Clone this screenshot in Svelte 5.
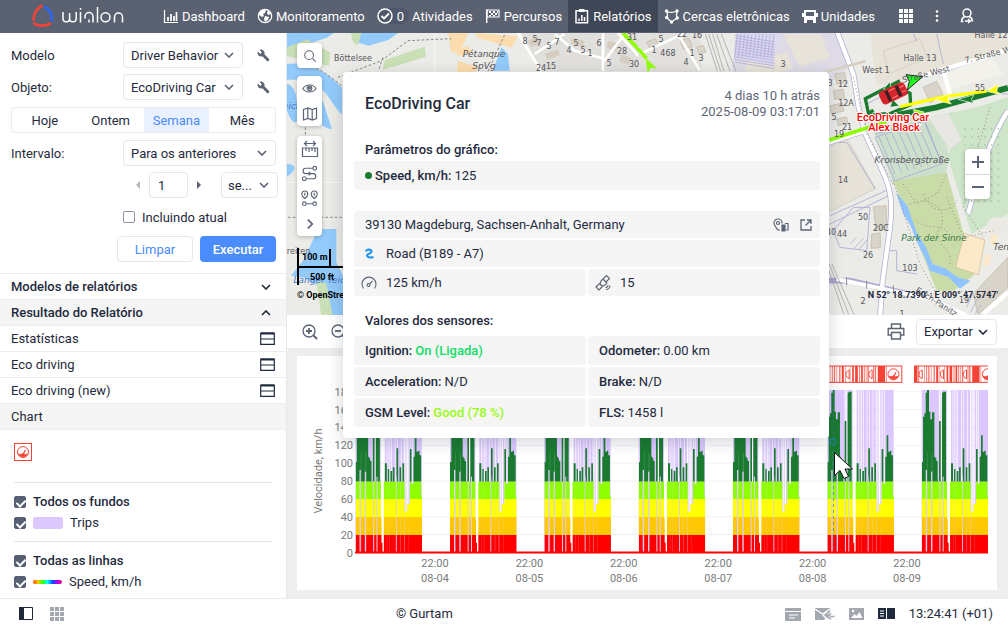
<script lang="ts">
  type NavItem = { label: string; icon: string; active?: boolean; count?: number };

  const navItems: NavItem[] = [
    { label: 'Dashboard', icon: 'chart' },
    { label: 'Monitoramento', icon: 'globe' },
    { label: 'Atividades', icon: 'check', count: 0 },
    { label: 'Percursos', icon: 'flag' },
    { label: 'Relatórios', icon: 'report', active: true },
    { label: 'Cercas eletrônicas', icon: 'fence' },
    { label: 'Unidades', icon: 'bus' },
  ];

  const periods = ['Hoje', 'Ontem', 'Semana', 'Mês'];
  let period = $state('Semana');
  let amount = $state('1');
  let includeCurrent = $state(false);

  const tables = ['Estatísticas', 'Eco driving', 'Eco driving (new)'];

  const sensors = [
    { name: 'Ignition', value: 'On (Ligada)', color: '#0fdc64' },
    { name: 'Odometer', value: '0.00 km' },
    { name: 'Acceleration', value: 'N/D' },
    { name: 'Brake', value: 'N/D' },
    { name: 'GSM Level', value: 'Good (78 %)', color: '#97fb12' },
    { name: 'FLS', value: '1458 l' },
  ];

  // ---- chart ----
  const dayStarts = [355.5, 450, 544.3, 638.7, 733, 827.3, 921.7];
  const dayLabels = ['08-04', '08-05', '08-06', '08-07', '08-08', '08-09'];
  const ticks = [0, 20, 40, 60, 80, 100, 120, 140, 160, 180];
  const yOf = (v: number) => 552.5 - v * 0.893;

  // one day of driving, a third of a pixel per unit: [right edge, top]
  const steps = [
    [4, 306], [8, 170], [12, 160], [16, 98], [22, 90], [26, 155], [31, 178], [38, 157],
    [41, 290], [44, 295], [48, 303], [52, 365], [57, 183], [61, 365], [64, 98], [73, 95],
    [76, 365], [78, 475], [81, 548], [85, 578], [88, 365], [94, 310], [97, 365], [101, 327],
    [105, 365], [110, 333], [112, 365], [117, 322], [123, 365], [128, 265], [132, 365],
    [137, 322], [141, 365], [146, 310], [148, 365], [155, 455], [163, 432], [168, 267],
    [174, 372], [178, 290], [183, 226], [188, 275], [192, 272], [197, 286], [200, 410],
  ];
  const silhouette = 'M0 580' + steps.map(([x, y]) => `V${y}H${x}`).join('') + 'V580Z';

  const bands = [
    { y: 88, h: 277, color: '#1a7b30' },
    { y: 365, h: 52, color: '#8fff00' },
    { y: 417, h: 54, color: '#ffff00' },
    { y: 471, h: 54, color: '#ffc800' },
    { y: 525, h: 56, color: '#ff0000' },
  ];

  const trips = [
    [0, 52], [55, 2], [60, 16], [88, 5], [95, 7], [104, 3], [109, 9], [120, 5], [127, 9],
    [138, 7], [148, 2], [153, 2], [159, 4], [166, 4], [172, 27],
  ];

  // gaps in the signal: [left, top, width, opacity]
  const slits = [
    [12, 330, 4, 1], [16, 275, 2, 0.2], [28, 335, 4, 1], [30, 280, 2, 0.3],
    [53, 365, 3, 1], [63, 350, 3, 1], [94, 365, 1, 0.4], [101, 365, 2, 0.3],
    [121, 350, 3, 0.9], [134, 365, 2, 0.4], [146, 330, 2, 0.6], [159, 430, 1, 0.4],
  ];

  // violation markers over the plot: [left, width]
  const stripes = [
    [0, 10], [12, 3], [30, 2], [36, 3], [42, 4], [50, 2], [58, 4], [66, 6], [76, 2], [90, 2],
    [97, 5], [106, 8], [118, 3], [124, 5], [132, 3], [138, 2], [143, 4], [160, 3], [165, 4],
    [174, 22], [199, 2],
  ];

  // ---- map ----
  const streetNumbers: [number, number, string][] = [
    [525, 41, '8'], [535, 39, '5'], [539, 43, '7'], [549, 46, '5'], [557, 42, '7'], [569, 50, '4'],
    [576, 43, '5'], [583, 50, '5'], [590, 53, '1'], [599, 43, '6'], [622, 51, '28'], [609, 63, '5'],
    [634, 64, '30'], [541, 68, '24'], [551, 66, '15'], [661, 39, '5'], [654, 50, '1'], [668, 53, '468'],
    [692, 53, '1'], [701, 58, '3'], [686, 62, '4'], [783, 64, '3'], [843, 84, '12'], [846, 103, '12A'],
    [834, 117, '5'], [847, 127, '21'], [839, 134, '19'], [843, 180, '14'], [863, 217, '50'],
    [881, 228, '20C'], [842, 234, '44'], [831, 232, '40'], [868, 255, '26'], [910, 268, '103'],
    [863, 301, '2'], [964, 300, '19'], [980, 88, '55'], [902, 314, '1'], [682, 34, '22'], [697, 35, '16'],
    [632, 37, '31'], [830, 83, '3'],
  ];
</script>

{#snippet chevron(up = false)}
  <svg class="chev" class:up viewBox="0 0 10 6" width="10" height="6">
    <path d="M1 1l4 4 4-4" fill="none" stroke="currentColor" stroke-width="1.6" />
  </svg>
{/snippet}

{#snippet wrench()}
  <svg viewBox="0 0 24 24" width="13" height="13" fill="#5b6475">
    <path d="M22.7 19l-9.1-9.1c.9-2.3.4-5-1.5-6.9-2-2-5-2.4-7.4-1.3L9 6 6 9 1.600 4.700C.4 7.100.9 10.100 2.900 12.100c1.900 1.900 4.600 2.400 6.900 1.500l9.100 9.100c.4.4 1 .4 1.400 0l2.300-2.300c.5-.4.5-1.100.1-1.400z" />
  </svg>
{/snippet}

{#snippet gauge()}
  <circle cx="9" cy="9" r="5.500" fill="#fff" stroke="#f44336" />
  <path d="M4.500 11q2.500 1 4.500-.5 2 1.500 4.500.5a5 5 0 0 1-9 0z" fill="#f44336" stroke="#f44336" stroke-width=".8" />
  <path d="M9 11.500l2.500-4.500" stroke="#f44336" stroke-width="1.200" />
{/snippet}

{#snippet magnifier(sign: string)}
  <svg viewBox="0 0 18 18" width="18" height="18" fill="none" stroke="#5b6475" stroke-width="1.300">
    <circle cx="8" cy="8" r="6" />
    <path d="M12.500 12.500l3.500 3.500" stroke-width="2" />
    <path d={sign} stroke-width="1.800" />
  </svg>
{/snippet}

<div class="app">
  <header>
    <a href="#home" class="logo" aria-label="wialon">
      <svg viewBox="0 0 92 24" width="92" height="24" fill="none">
        <path d="M10.500 1.500C4.500 4 .8 11.500 1.800 17" stroke="#f44336" stroke-width="2.600" />
        <path d="M1.500 19c4.500 3.600 12 3.200 17.500.2" stroke="#f44336" stroke-width="2.800" />
        <path d="M12.500 2.500c5.500 3 8.500 9 7 15" stroke="#2b66f6" stroke-width="2.600" />
        <g stroke="#fff" stroke-width="1.500">
          <path d="M31 8v6.500a3.300 3.300 0 0 0 6.600 0V9m0 5.500a3.300 3.300 0 0 0 6.600 0V8" />
          <path d="M48.500 8v10.500M48.500 4v1.800" />
          <path d="M53 14.500v-2a4 4 0 0 1 8 0v6M57 15.500v3" />
          <path d="M65.500 3v15.500" />
          <circle cx="73.500" cy="13.300" r="4.500" />
          <path d="M82.500 18.500v-5.500a4 4 0 0 1 8 0v5.500" />
        </g>
      </svg>
    </a>
    <nav>
      {#each navItems as item}
        <a href="#{item.icon}" class:active={item.active}>
          <span class="nav-icon" class:pill={item.count !== undefined}>
            <svg viewBox="0 0 16 16" width="16" height="16" fill="none" stroke="#fff" stroke-width="1.500">
              {#if item.icon === 'chart'}
                <path d="M1.500 2v12.500H15" stroke-width="1.200" />
                <path d="M5 13V9M8 13V6M11 13V8M13.500 13V4" stroke-width="1.700" />
              {:else if item.icon === 'globe'}
                <circle cx="8" cy="8" r="6.700" stroke-width="1.200" />
                <path d="M2 5l3-3 4 0-1 3-2 1 1 2-2 1-3-2zM8 8l4 1-1 3-3 2-1-3zM11 2l3 4-3 1-1-2z" fill="#fff" stroke="none" />
              {:else if item.icon === 'check'}
                <circle cx="8" cy="8" r="7" />
                <path d="M4.500 8l2.500 2.500 5-5" stroke-width="1.800" />
              {:else if item.icon === 'flag'}
                <path d="M1.700 1.500V15" />
                <path d="M2 2h12v7H2z" stroke-width="1.200" />
                <path d="M4 3h2v2H4zM8 3h2v2H8zM6 5h2v2H6zM10 5h2v2h-2zM4 7h2v1.500H4zM8 7h2v1.500H8zM12 3h1v2h-1z" fill="#fff" stroke="none" />
              {:else if item.icon === 'report'}
                <path d="M2 2.800h11.500v12H2z" />
                <path d="M5 1h5.500v3H5z" fill="#fff" stroke="none" />
                <path d="M5 13v-2.500M7.800 13V7M10.500 13V9" />
              {:else if item.icon === 'fence'}
                <path d="M3 3.500q5 2 10-.5-1 4 0 7l-5.500 4L3 10q1-3 0-6.500z" stroke-width="1.300" />
                <g fill="#fff" stroke="none">
                  <circle cx="2.500" cy="3" r="1.700" /><circle cx="13" cy="3" r="1.700" />
                  <circle cx="13.300" cy="10" r="1.700" /><circle cx="7.500" cy="14" r="1.700" /><circle cx="2.700" cy="9.500" r="1.700" />
                </g>
              {:else}
                <path d="M2 2h12v10H2zM0 5h2v4H0zM14 5h2v4h-2zM2 12h3v3H2zM11 12h3v3h-3z" fill="#fff" stroke="none" />
                <path d="M4 4h8v4H4z" fill="#5a6170" stroke="none" />
              {/if}
            </svg>
            {#if item.count !== undefined}<span>{item.count}</span>{/if}
          </span>
          {item.label}
        </a>
      {/each}
    </nav>
    <div class="header-tools">
      <button aria-label="Aplicativos">
        <svg viewBox="0 0 15 15" width="15" height="15" fill="#fff">
          {#each [0, 5, 10] as y}{#each [0, 5, 10] as x}
            <rect {x} {y} width="4" height="4" />
          {/each}{/each}
        </svg>
      </button>
      <button aria-label="Mais">
        <svg viewBox="0 0 4 14" width="4" height="14" fill="#fff">
          <circle cx="2" cy="2.500" r="1.300" /><circle cx="2" cy="7" r="1.300" /><circle cx="2" cy="11.500" r="1.300" />
        </svg>
      </button>
      <button aria-label="Usuário">
        <svg viewBox="0 0 14 16" width="14" height="16" fill="none" stroke="#fff" stroke-width="1.500">
          <circle cx="7" cy="5" r="4" />
          <path d="M3.500 13.500H1.500c0-2.500 1.300-4 3.300-5M12.500 13.500c0-2.500-1.300-4-3.300-5M5 13h5M8 11l2.500 2L8 15" />
        </svg>
      </button>
    </div>
  </header>

  <div class="body">
    <aside>
      <form onsubmit={(e) => e.preventDefault()}>
        <div class="row">
          <label for="template">Modelo</label>
          <span class="select mid">
            <select id="template"><option>Driver Behavior</option></select>{@render chevron()}
          </span>
          <button type="button" class="tool" aria-label="Editar modelo">{@render wrench()}</button>
        </div>
        <div class="row">
          <label for="object">Objeto:</label>
          <span class="select mid">
            <select id="object"><option>EcoDriving Car</option></select>{@render chevron()}
          </span>
          <button type="button" class="tool" aria-label="Editar objeto">{@render wrench()}</button>
        </div>
        <div class="tabs">
          {#each periods as p}
            <button type="button" class:on={period === p} onclick={() => (period = p)}>{p}</button>
          {/each}
        </div>
        <div class="row">
          <label for="interval">Intervalo:</label>
          <span class="select wide">
            <select id="interval"><option>Para os anteriores</option></select>{@render chevron()}
          </span>
        </div>
        <div class="row stepper">
          <button type="button" class="arrow dim" aria-label="Menos">
            <svg viewBox="0 0 4 8" width="4" height="8"><path d="M4 0v8L0 4z" fill="currentColor" /></svg>
          </button>
          <input type="text" bind:value={amount} aria-label="Quantidade" />
          <button type="button" class="arrow" aria-label="Adicionar">
            <svg viewBox="0 0 4 8" width="4" height="8"><path d="M0 0v8l4-4z" fill="currentColor" /></svg>
          </button>
          <span class="select unit">
            <select aria-label="Unidade"><option>se...</option></select>{@render chevron()}
          </span>
        </div>
        <label class="row include">
          <input type="checkbox" bind:checked={includeCurrent} />
          Incluindo atual
        </label>
        <div class="row actions">
          <button type="button" class="clear">Limpar</button>
          <button type="submit" class="run">Executar</button>
        </div>
      </form>

      <button class="item head">Modelos de relatórios {@render chevron()}</button>
      <button class="item head shaded">Resultado do Relatório {@render chevron(true)}</button>
      {#each tables as t}
        <button class="item">
          {t}
          <svg viewBox="0 0 15 13" width="15" height="13" fill="none" stroke="#1f2a3d">
            <path d="M1 1.500h13" stroke-width="2" />
            <path d="M.7 1h13.600v11.300H.7zM1 7h13" stroke-width="1.200" />
          </svg>
        </button>
      {/each}
      <button class="item shaded">Chart</button>

      <div class="legend">
        <svg class="violation" viewBox="0 0 18 18" width="18" height="18">
          <rect x=".5" y=".5" width="17" height="17" fill="#fff" stroke="#f44336" />
          {@render gauge()}
        </svg>
        <hr />
        <label class="group"><input type="checkbox" checked /> Todos os fundos</label>
        <label><input type="checkbox" checked /> <i class="swatch"></i> Trips</label>
        <hr />
        <label class="group"><input type="checkbox" checked /> Todas as linhas</label>
        <label><input type="checkbox" checked /> <i class="rainbow"></i> Speed, km/h</label>
      </div>
    </aside>

    <main>
      <section class="map">
        <svg class="tiles" viewBox="287 33 721 282" preserveAspectRatio="xMinYMin slice">
          <rect x="287" y="33" width="721" height="282" fill="#ebebe7" />

          <g transform="translate(288 34) scale(.33333)">
            <g fill="#92cafb">
              <path d="M-3-3h140l-20 14-70 22-30 2-20 10zM190-3l12 26 40 12 60-18 28-20z" />
              <path d="M-3 90c50-8 110 10 165 72v80c-26-24-40-62-70-84-30-18-60-22-95-20z" />
              <path d="M-3 150c30 4 34 60 30 110-4 14-20 0-30-30zM60 190l44 10 28 85c-30 0-52-30-72-95zM-3 390c30 0 30 20-3 40zM90 585h55v100l20 40v120h-60l-16-90-40-24-40-6 40-50z" />
              <path d="M640 40l20 20 5 50h-50z" />
            </g>
            <g fill="#c9dfb5">
              <path d="M190-3h30l-10 36c-10 0-20-10-20-36zM-3 40l60-24 70 40-4 40-126-30zM290 78l120-40 4 30-130 40z" />
              <path d="M870 85l66-16v42h-66zM85 740l30 8 20 100H100z" />
            </g>
            <g fill="#fbdcae">
              <path d="M480-3h60l-20 50-30 10zM560-3l130 10-20 34-100-30zM510 80l60 20-10 14h-54zM500 50l40-14 14 20-44 10z" />
            </g>
            <path d="M700-3h380v115H760z" fill="#e1dfdc" />
            <g fill="#d5cdbf">
              <path d="M720 20l30-12 8 20-28 12zM770 60l40-14 6 18-38 14zM960 20l34 10-8 22-30-10zM1000 60l30 12-8 20-30-12zM850 12l40 8-4 18-36-8z" />
            </g>
            <g fill="none" stroke="#fff" stroke-width="8">
              <path d="M690-3l70 115M740 60l90-60M800 0l60 50 90 24M945-3v114M950 80l60-80M990-3l90 100" />
            </g>
            <g fill="none" stroke="#888" stroke-width="3" stroke-dasharray="8 6">
              <path d="M60 90c30 10 70 40 105 68M150 130L280 80l80-60 130-6M600 112l50-110M0 550h170M52 280v30M285 70l-14 40" />
            </g>
            <path d="M-3 445h170M440 0v112" stroke="#f7f7f5" stroke-width="3" />
            <path d="M1005-3l75 78" stroke="#8fff00" stroke-width="11" />
          </g>

          <g transform="translate(640 34) scale(.33333)">
            <path d="M-6-3h190v120H-6z" fill="#e3e1de" />
            <path d="M290-3h300l40 100-70 60H270z" fill="#dedbe6" />
            <path d="M320 85l120-30 20 50-150 40zM430 0h110l30 70-90 30zM690-3h420v60l-400 100z" fill="#e8e3d8" />
            <path d="M290-3h130l-22 98-116-26z" fill="#dcdaf0" />
            <g stroke="#aaa5d4" stroke-width="2">
              {#each Array(11) as _, i}
                <path d={`M${292 + i * 11} 0l-8 70M${284} ${4 + i * 8}l120 20`} fill="none" />
              {/each}
            </g>
            <g fill="#d9d4c9" stroke="#bdb3a3" stroke-width="2">
              <path d="M850 160l40-18 20 40-40 24zM700 518l38-3 4 72-34 2zM695 600l26-3v44l-28 2zM1000 780l104-110v90l-90 82z" />
              <path d="M585 120l30-4 4 30-28 4zM580 170l30-4 4 26-30 4zM570 215l38-8 4 24-38 8zM590 255l30-6 3 20-28 6zM120 20l26-8 10 26-26 8zM20 24l26-10 10 22-26 10zM170 40l20-6 8 20-20 6z" />
            </g>
            <path d="M566 340l52-32 88 156-140 70zM730 50l110-35 22 55-116 50z" fill="#e6e2d8" stroke="#cfc6b8" stroke-width="2" />
            <path d="M700 290l130-50 60 10 40 120-20 70-150 10z" fill="#cde0cc" />
            <path d="M930 350L860 250l150-30 94-30v350l-110 60-70-230z" fill="#cfe5c9" />
            <path d="M865 250l60-12 40 80-35 28z" fill="#e9e7e3" />
            <path d="M760 440l160-25 50 180 60 40-30 90-60 45h-50z" fill="#c9dca8" />
            <path d="M910 110l150-40 30 50-140 40-40 20z" fill="#f2f2ea" />
            <path d="M768 475l34 40 10 30 20 55 26 40 20 50 40 14 34 26 40 10-32 24-34-34-56-20-16-40-22-44-20-50-22-36z" fill="#8fc4ff" />
            <path d="M973 598l62 20-20 104-68-22z" fill="#fbe9ca" stroke="#cdb98e" stroke-width="2" />
            <path d="M1036 660l18 5-8 32-18-5zM1054 600l20 5-6 30-18-4z" fill="#fbe9ca" />
            <ellipse cx="1070" cy="575" rx="30" ry="26" fill="#ebe9e4" />

            <g fill="none" stroke="#aaa9d2" stroke-width="2.500">
              <path d="M570 545l170-76M560 575l186-90M570 325l50 0 86 140M640 520l50 0-10 130-80-10-20-50zM750 650l20 0v60l60 10M706 300l150-40M705 310l60 130 140-50-50-130z" />
              {#each Array(8) as _, i}
                <path d={`M${715 + i * 20} ${305 - i * 5}l50 115`} />
              {/each}
              <path d="M890 0l20 90M1104 50l-180 60M1060 180l44 0M680 210l60-30M820 0l10 20" />
            </g>
            <g fill="none" stroke="#aaa9d2" stroke-width="17">
              <path d="M590-10l50 130 16 100 20 80 60 130c20 50 20 90 14 150l-22 160-8 110M550 740l80 0 200 46M560 328l110-36M1104 230c-40 60-80 160-120 310" />
            </g>
            <g fill="none" stroke="#fff" stroke-width="13">
              <path d="M590-10l50 130 16 100 20 80 60 130c20 50 20 90 14 150l-22 160-8 110M590 735l280 60 110 50M560 328l110-36M1104 230c-40 60-80 160-120 310M800 140l304-92M910 110l20 70M1030 840l74-64" />
              <path d="M0 60l150-70M120 10l60 100" stroke-width="8" />
            </g>
            <path d="M556 114l120-32" stroke="#d8cfc4" stroke-width="8" />
            <g fill="none" stroke="#999" stroke-width="2">
              <path d="M196 0l36 112M206 0l36 112M218 0l34 112M230 0l40 112M244 0l44 112M560 690l52 152M568 690l58 152M576 690l66 152" />
            </g>
            <g stroke="#918d78" stroke-width="3" stroke-dasharray="3 8" fill="none">
              <path d="M790 450l40 60 60-30 30-60M810 510c60-30 120 20 90 70s40 60 30 110M850 480c20 60 80 60 100 20M830 560c40 40 90-10 100 60M760 440l80 250 50 90 90-10M640 130l40 170 80 150M1050 220l-60 200-20 100 60 90M920 490l50 120 90-20" />
            </g>
            <g fill="#8eb78b">
              {#each Array(10) as _, r}{#each Array(6) as _, c}
                <circle cx={975 + c * 20} cy={285 + r * 24} r="2" />
              {/each}{/each}
            </g>
            <path d="M630 630l20-20M640 645l30-32M655 648l26-30M980 820l18-40M992 835l20-40M1004 842l20-30" stroke="#aaa5d4" stroke-width="2" />
            <path d="M620 730v24M680 740v24M760 754v24" stroke="#8b8b9d" stroke-width="3" />

            <!-- driven track -->
            <path d="M568 318l100-32 70-22M760 240l100-10" stroke="#8fff00" stroke-width="11" fill="none" />
            <path d="M700 228l-14 12-10-46 104-54M790 168l20 10 2 34-60 26-54 4" stroke="#1a7b30" stroke-width="10" fill="none" />
            <path d="M760 245l130-25 214-58" stroke="#1a7b30" stroke-width="18" fill="none" />
            <path d="M780 218l130-30 130-16" stroke="#ffff00" stroke-width="9" fill="none" />
            <g stroke="#fff" stroke-width="2">
              <path d="M1040 172l36-22-6 22 14 10z" fill="#ffff00" />
              <path d="M886 198l44-20-6 20 10 12z" fill="#ffff00" />
              <path d="M954 196l48-14-8 14 8 12z" fill="#1a7b30" />
              <path d="M730 165l20-22 4 26zM750 220l8-24 20 20z" fill="#1a7b30" />
              <path d="M820 226l32 8-24 14z" fill="#8fff00" />
              <path d="M18 74l30 28-18-2-6 14zM-4 45l22 26" fill="#8fff00" stroke="#8fff00" />
            </g>
            <path d="M-6 44l26 30" stroke="#8fff00" stroke-width="11" />
            <path d="M848 128l-50-6 10 20-6 26z" fill="#1dff1d" stroke="#222" stroke-width="3" />
            <g transform="translate(760 178) rotate(-25)">
              <rect x="-42" y="-21" width="84" height="42" rx="12" fill="#d3262c" />
              <path d="M-22-17h10v34h-10zM12-17h10v34H12z" fill="#3a2024" />
              <path d="M-10-12h20M-10 12h20M24-8h14M24 8h14" stroke="#ff8383" stroke-width="3" />
            </g>
          </g>

          <g class="numbers">
            {#each streetNumbers as [x, y, n]}
              <text {x} y={y + 3}>{n}</text>
            {/each}
          </g>
          <g class="places">
            <text x="353" y="61">Böttelsee</text>
            <text x="484" y="57" class="it">Pétanque</text>
            <text x="484" y="69" class="it">SpVg</text>
            <text x="920" y="61">Halle 13</text>
            <text x="991" y="38">Halle 12</text>
            <text x="876" y="73">West 1</text>
            <text x="912" y="163" class="it">Kronsbergstraße</text>
            <text x="934" y="241" class="it park">Park der Sinne</text>
            <text x="1004" y="250" class="it">Tenn</text>
            <text x="926" y="77" transform="rotate(-14 926 75)">Straße West</text>
            <text x="994" y="56" transform="rotate(-14 994 56)">7. Straße West</text>
            <text x="935" y="304" transform="rotate(32 935 304)">Erich-Panitz</text>
            <text x="290" y="109" class="it water">Teich</text>
            <text x="296" y="254">breiten</text>
            <text x="322" y="283" class="it water">Langer Teich</text>
          </g>
          <g class="unit-label">
            <text x="893" y="121">EcoDriving Car</text>
            <text x="894" y="131">Alex Black</text>
          </g>
          <g class="scale">
            <path d="M298 248v37M298 267h60M330 249v18" stroke="#000" stroke-width="2" />
            <text x="302" y="260">100 m</text>
            <text x="310" y="280">500 ft</text>
            <text x="297" y="298">© OpenStreetMap</text>
          </g>
        </svg>

        <div class="map-tools">
          <div class="tool-box">
            <button aria-label="Buscar">
              <svg viewBox="0 0 16 16" width="14" height="14" class="line"><circle cx="7" cy="7" r="5" /><path d="M11 11l3.500 3.500" /></svg>
            </button>
          </div>
          <div class="tool-box">
            <button aria-label="Visibilidade">
              <svg viewBox="0 0 16 16" width="15" height="15" class="line">
                <path d="M1 8c3-5 11-5 14 0-3 5-11 5-14 0z" /><circle cx="8" cy="7.800" r="2.500" /><circle cx="8" cy="7.500" r="1" fill="#5b6475" />
              </svg>
            </button>
            <button aria-label="Camadas">
              <svg viewBox="0 0 16 16" width="16" height="16" class="line"><path d="M1.500 3.500l4.300-1.500 4.400 1.500 4.300-1.500v10.500l-4.300 1.500-4.400-1.500-4.300 1.500zM5.800 2v10.500M10.200 3.500V14" /></svg>
            </button>
          </div>
          <div class="tool-box">
            <button aria-label="Medir">
              <svg viewBox="0 0 18 18" width="18" height="18" class="line"><path d="M1.500 8h15v8.500h-15zM5 8v3M8 8v4M11 8v3M14 8v4M3.500 3.500h11M6 1L3.500 3.500 6 6M12 1l2.500 2.500L12 6" /></svg>
            </button>
            <button aria-label="Rota">
              <svg viewBox="0 0 18 18" width="17" height="17" class="line"><circle cx="14.500" cy="3.500" r="2" /><circle cx="3.500" cy="14.500" r="2" /><path d="M12.500 3.500H5a2.800 2.800 0 0 0 0 5.600h8a2.700 2.700 0 0 1 0 5.400H5.500M8 7.500l2.500 1.600L8 11" /></svg>
            </button>
            <button aria-label="Distâncias">
              <svg viewBox="0 0 18 18" width="17" height="17" class="line"><path d="M4 9C1 7 .8 5.500.8 4.200a3.200 3.200 0 0 1 6.400 0C7.200 5.500 7 7 4 9zM14 9c-3-2-3.200-3.500-3.200-4.800a3.200 3.200 0 0 1 6.400 0c0 1.300-.2 2.800-3.200 4.800zM4 3v3M14 3v3M5.500 14.500h7" /><circle cx="3.500" cy="14.500" r="1.900" /><circle cx="14.500" cy="14.500" r="1.900" /></svg>
            </button>
            <button aria-label="Expandir">
              <svg viewBox="0 0 16 16" width="14" height="14" class="line"><path d="M5.500 3l5 5-5 5" stroke-width="2" /></svg>
            </button>
          </div>
        </div>
        <div class="map-zoom">
          <button aria-label="Aproximar"><svg viewBox="0 0 14 14" width="14" height="14" class="line"><path class="thick" d="M7 1v12M1 7h12" /></svg></button>
          <button aria-label="Afastar"><svg viewBox="0 0 14 14" width="14" height="14" class="line"><path class="thick" d="M1 7h12" /></svg></button>
        </div>
        <span class="coords">N 52° 18.7390' : E 009° 47.5747'</span>
      </section>

      <div class="chart-bar">
        <button aria-label="Ampliar">{@render magnifier('M8 5v6M5 8h6')}</button>
        <button aria-label="Reduzir">{@render magnifier('M5 8h6')}</button>
        <button class="print" aria-label="Imprimir">
          <svg viewBox="0 0 18 17" width="18" height="17" fill="none" stroke="#5b6475" stroke-width="1.400">
            <path d="M4.500 5V1h9v4M4.500 12H1.200V5.500h15.600V12h-3.300M4.500 9.500h9V16h-9z" />
          </svg>
        </button>
        <button class="export">Exportar {@render chevron()}</button>
      </div>

      <section class="chart">
        <svg viewBox="297 356 700 234" role="img" aria-label="Velocidade, km/h">
          <defs>
            <clipPath id="plot"><rect x="355" y="360" width="633" height="196" /></clipPath>
            <clipPath id="day"><path d={silhouette} /></clipPath>
          </defs>
          {#each ticks as t}
            <path d="M356 {yOf(t)}H988" stroke="#f1f1f3" />
            <text class="axis" x="353" y={yOf(t) + 4} text-anchor="end">{t}</text>
          {/each}
          <text class="axis" transform="translate(322 471) rotate(-90)" text-anchor="middle">Velocidade, km/h</text>
          <g clip-path="url(#plot)">
            {#each dayStarts as x}
              <g transform="translate({x} 360) scale(.33333)">
                {#each trips as [tx, w]}
                  <rect x={tx} y="90" width={w} height="489" fill="#dcc8ff" />
                {/each}
                <path d="M98 90v489M150 90v400M166 90v489" stroke="#ece1ff" stroke-width="3" />
                <g clip-path="url(#day)">
                  {#each bands as b}
                    <rect x="0" y={b.y} width="201" height={b.h} fill={b.color} />
                  {/each}
                </g>
                {#each slits as [sx, sy, w, o]}
                  <rect x={sx} y={sy} width={w} height={580 - sy} fill="#dccdf2" opacity={o} />
                {/each}
              </g>
              <g transform="translate({x - 7.500} 365) scale(.33333)">
                <rect x="1" y="3" width="245" height="49" fill="#fff" stroke="#f44336" stroke-width="3" />
                {#each [24, 88, 157] as gx}
                  <path d="M{gx} 15c-13 4-13 22 0 26z" fill="none" stroke="#f44336" stroke-width="3" />
                {/each}
                {#each stripes as [sx, w]}
                  <rect x={sx} y="3" width={w} height="49" fill="#f44336" opacity={w > 4 ? 1 : 0.75} />
                {/each}
                <g transform="translate(194 1) scale(3)">{@render gauge()}</g>
              </g>
            {/each}
            <path d="M355 552.500H988" stroke="#ff0000" stroke-width="2" />
          </g>
          {#each dayLabels as d, i}
            <text class="axis" x={435 + i * 94.4} y="567" text-anchor="middle">22:00</text>
            <text class="axis" x={435 + i * 94.4} y="582" text-anchor="middle">{d}</text>
          {/each}
          <path d="M833.500 390V552" stroke="#3a78a8" stroke-dasharray="3 3" opacity=".6" />
          <circle cx="833" cy="441.500" r="3" fill="none" stroke="#1c86c8" />
          <path d="M834.500 452.500v23l5.500-5 4 8 4.500-2-3.500-7.500h7.500z" fill="#fff" stroke="#111" />
        </svg>
      </section>

      <article class="popup">
        <div class="popup-head">
          <h2>EcoDriving Car</h2>
          <p>4 dias 10 h atrás<br />2025-08-09 03:17:01</p>
        </div>
        <h3>Parâmetros do gráfico:</h3>
        <div class="cell tall"><i class="dot"></i><b>Speed, km/h:</b> 125</div>
        <div class="facts">
          <div class="cell full">
            <span class="grow">39130 Magdeburg, Sachsen-Anhalt, Germany</span>
            <button aria-label="Street view">
              <svg viewBox="0 0 16 14" width="16" height="14" fill="none" stroke="#5b6475" stroke-width="1.200">
                <path d="M7 12H5C2.500 9 1 7 1 5a4 4 0 0 1 8 0v.5" /><circle cx="5" cy="5" r="1.500" />
                <path d="M9 7h3v6H9z" fill="#5b6475" /><path d="M12 5.500h3V12h-2" />
              </svg>
            </button>
            <button aria-label="Abrir">
              <svg viewBox="0 0 12 12" width="12" height="12" fill="none" stroke="#5b6475" stroke-width="1.300">
                <path d="M5 1H1v10h10V7M7 1h4v4M11 1L5.500 6.500" />
              </svg>
            </button>
          </div>
          <div class="cell full iconed">
            <svg viewBox="0 0 16 16" width="16" height="16" fill="none" stroke="#2196f3" stroke-width="2.200">
              <path d="M5 5.500c0-2.500 5.500-2.500 5.500 0S5.800 7.500 6 9.500s3.500 2.500 6.500 1.500" />
            </svg>
            Road (B189 - A7)
          </div>
          <div class="cell iconed">
            <svg viewBox="0 0 16 16" width="16" height="16" fill="none" stroke="#5b6475" stroke-width="1.100">
              <path d="M2.500 13.500a7 7 0 1 1 11 0" /><circle cx="7.500" cy="10" r="1.500" /><path d="M8.500 9l3-3" />
            </svg>
            125 km/h
          </div>
          <div class="cell iconed">
            <svg viewBox="0 0 16 16" width="16" height="16" fill="none" stroke="#5b6475" stroke-width="1.100">
              <path d="M8 4l3.500-3.500 3 3L11 7zM1 12l3.500-3.500 3 3L4 15zM6 6l2-2 4 4-2 2-3 1-2-2zM11 14.500a4 4 0 0 0 4-4M10.500 12.500a2.500 2.500 0 0 0 2.500-2.500" />
            </svg>
            15
          </div>
        </div>
        <h3 class="second">Valores dos sensores:</h3>
        <div class="facts">
          {#each sensors as s}
            <div class="cell tall">
              <b>{s.name}:</b>
              {#if s.color}<b style:color={s.color}>{s.value}</b>{:else}{s.value}{/if}
            </div>
          {/each}
        </div>
      </article>
    </main>
  </div>

  <footer>
    <div class="group-icons">
      <button aria-label="Painel">
        <svg viewBox="0 0 14 13" width="14" height="13"><path d="M.5.500h13v12H.5z" fill="#fff" stroke="#1f2a3d" /><path d="M0 0h5v13H0z" fill="#1f2a3d" /></svg>
      </button>
      <button aria-label="Grade">
        <svg viewBox="0 0 14 14" width="14" height="14" fill="#a3a7b0">
          {#each [0, 5, 10] as y}{#each [0, 5, 10] as x}
            <rect {x} {y} width="4" height="4" />
          {/each}{/each}
        </svg>
      </button>
    </div>
    <a href="#gurtam">© Gurtam</a>
    <div class="group-icons right">
      <button aria-label="Notificações">
        <svg viewBox="0 0 16 14" width="16" height="14"><path d="M0 1h16v13H0z" fill="#a3a7b0" /><path d="M0 4.500h16M4 8h9M4 11h6" stroke="#fff" stroke-width="1.200" /></svg>
      </button>
      <button aria-label="Mensagens">
        <svg viewBox="0 0 20 14" width="20" height="14"><path d="M0 1h15v5l-6 7H0z" fill="#a3a7b0" /><path d="M0 2l7.500 5L15 2" stroke="#fff" fill="none" stroke-width="1.400" /><path d="M9 8.500h11M13 5.500l-3.500 3L13 11.500M16 5.500v6" stroke="#fff" fill="none" stroke-width="3" /><path d="M13.500 5L10 8l3.500 3M10 8h5M19.500 9.500H15M16 6.500l-3 3 3 3" stroke="#a3a7b0" fill="none" stroke-width="1.500" /></svg>
      </button>
      <button aria-label="Imagens">
        <svg viewBox="0 0 15 13" width="15" height="13"><path d="M0 1h15v12H0z" fill="#a3a7b0" /><path d="M2 11l3.500-4 2 2 3-4 3 6z" fill="#fff" /><circle cx="4" cy="4" r="1.200" fill="#fff" /></svg>
      </button>
      <button aria-label="Layout">
        <svg viewBox="0 0 17 11" width="17" height="11" fill="#1f2a3d"><path d="M0 0h8v11H0zM9 0h8v11H9z" /><path d="M2 3h4M2 5.500h4M2 8h4" stroke="#fff" /></svg>
      </button>
      <time>13:24:41 (+01)</time>
    </div>
  </footer>
</div>

<style>
  :global(body) {
    font-family: Roboto, "Liberation Sans", sans-serif;
    font-size: 13px;
    color: #1f2a3d;
  }

  * {
    box-sizing: border-box;
    margin: 0;
  }

  button,
  input,
  select {
    font: inherit;
    color: inherit;
  }

  button {
    padding: 0;
    border: none;
    background: none;
    cursor: pointer;
  }

  a {
    color: inherit;
    text-decoration: none;
  }

  svg {
    flex: none;
    display: block;
  }

  .app {
    display: flex;
    flex-direction: column;
    min-height: 100vh;
  }

  /* --- Header --- */
  header {
    display: flex;
    align-items: center;
    height: 33px;
    padding-bottom: 1px;
    background: #5a6170;
    color: #fff;
  }

  .logo {
    margin: 0 33px 0 32px;
  }

  nav {
    display: flex;
    align-self: stretch;
    white-space: nowrap;
  }

  nav a {
    display: flex;
    align-items: center;
    gap: 3px;
    padding: 0 6px;
  }

  nav a.active {
    background: #3f4757;
  }

  .nav-icon {
    display: flex;
    align-items: center;
    gap: 4px;
  }

  .pill {
    padding-right: 5px;
    border-radius: 10px;
    background: #50576a;
  }

  .header-tools {
    display: flex;
    align-items: center;
    gap: 21px;
    margin: 0 34px 0 auto;
  }

  .body {
    display: flex;
    flex: 1;
  }

  /* --- Sidebar --- */
  aside {
    flex: none;
    width: 287px;
    border-right: 1px solid #e8e8e8;
    background: #fff;
  }

  form {
    display: flex;
    flex-direction: column;
    gap: 6px;
    padding: 9px 10px 11px 11px;
  }

  .row {
    display: flex;
    align-items: center;
    height: 26px;
  }

  .row > label {
    width: 112px;
  }

  .select {
    position: relative;
    color: #1f2a3d;
  }

  .select .chev {
    position: absolute;
    top: 10px;
    right: 9px;
    pointer-events: none;
    color: #5b6475;
  }

  select {
    appearance: none;
    width: 100%;
    height: 26px;
    padding: 0 7px;
    border: 1px solid #e6e7ea;
    border-radius: 4px;
    background: #fff;
  }

  .mid {
    width: 120px;
  }

  .wide {
    width: 153px;
  }

  .unit {
    width: 57px;
    margin-left: auto;
  }

  .unit select {
    padding-left: 6px;
  }

  .tool {
    margin-left: 14px;
  }

  .chev.up {
    transform: rotate(180deg);
  }

  .tabs {
    display: grid;
    grid-template-columns: repeat(4, 1fr);
    height: 26px;
    margin: 1px 0;
    border: 1px solid #ececee;
    border-radius: 3px;
  }

  .tabs .on {
    background: #e9f0ff;
    color: #4a8cfb;
  }

  .stepper {
    padding-left: 125px;
    margin-right: -2px;
  }

  .stepper input {
    width: 39px;
    height: 26px;
    margin: 0 9px;
    padding: 0 8px;
    border: 1px solid #e6e7ea;
    border-radius: 4px;
  }

  .arrow {
    color: #5b6475;
  }

  .arrow.dim {
    color: #b3b7bf;
  }

  input[type="checkbox"] {
    appearance: none;
    flex: none;
    width: 12px;
    height: 12px;
    border: 1px solid #8c93a0;
    border-radius: 2px;
    background: #fff;
  }

  input[type="checkbox"]:checked {
    position: relative;
    border-color: #566072;
    background: #566072;
  }

  input[type="checkbox"]:checked::after {
    content: "";
    position: absolute;
    top: 1px;
    left: 3px;
    width: 4px;
    height: 7px;
    border: solid #fff;
    border-width: 0 2px 2px 0;
    transform: rotate(45deg);
  }

  .include {
    gap: 7px;
    padding-left: 112px;
  }

  .actions {
    justify-content: flex-end;
    gap: 7px;
  }

  .clear,
  .run {
    width: 76px;
    height: 26px;
    border-radius: 4px;
  }

  .clear {
    border: 1px solid #e6e7ea;
    color: #4a8cfb;
  }

  .run {
    background: #4a8cfb;
    color: #fff;
    font-weight: 500;
  }

  .item {
    display: flex;
    align-items: center;
    justify-content: space-between;
    width: 100%;
    height: 26px;
    padding: 0 11px;
    border-top: 1px solid #ededed;
  }

  .item .chev {
    margin-right: 4px;
  }

  .head {
    font-weight: 500;
  }

  .shaded {
    background: #f5f5f5;
  }

  .legend {
    padding: 13px 14px 0;
    border-top: 1px solid #ededed;
  }

  .legend hr {
    height: 1px;
    margin-bottom: 8px;
    border: none;
    background: #e4e4e4;
  }

  .violation {
    margin-bottom: 21px;
  }

  .legend label {
    display: flex;
    align-items: center;
    gap: 7px;
    height: 21px;
  }

  .legend label + hr {
    margin-top: 8px;
  }

  .group {
    font-weight: 500;
  }

  .swatch {
    width: 30px;
    height: 12px;
    border-radius: 2px;
    background: #dcc8ff;
  }

  .rainbow {
    width: 29px;
    height: 4px;
    border-radius: 2px;
    background: linear-gradient(90deg, #ff3c00, #ffc800, #3f0, #0ff, #05f, #a0f, #ff0080);
  }

  /* --- Map --- */
  main {
    position: relative;
    display: flex;
    flex: 1;
    flex-direction: column;
    min-width: 0;
  }

  .map {
    position: relative;
    flex: 1;
    min-height: 282px;
    overflow: hidden;
  }

  .tiles {
    position: absolute;
    width: 100%;
    height: 100%;
  }

  .numbers,
  .places {
    font-family: "DejaVu Sans", sans-serif;
    font-size: 8px;
    fill: #55555a;
    text-anchor: middle;
  }

  .it {
    font-size: 9px;
    font-style: italic;
  }

  .park {
    fill: #3a7a45;
  }

  .water {
    fill: #4a78c4;
  }

  .unit-label {
    font-size: 11px;
    font-weight: 500;
    fill: #f00;
    stroke: #fff;
    stroke-width: 2px;
    paint-order: stroke;
    text-anchor: middle;
  }

  .scale {
    font-size: 9px;
    font-weight: 700;
  }

  .line {
    fill: none;
    stroke: #5b6475;
    stroke-width: 1.2;
  }

  .thick {
    stroke-width: 2;
  }

  .map-tools {
    position: absolute;
    top: 10px;
    left: 10px;
    display: flex;
    flex-direction: column;
    gap: 8px;
  }

  .tool-box,
  .map-zoom {
    display: flex;
    flex-direction: column;
    width: 25px;
    border-radius: 4px;
    background: #fff;
    box-shadow: 0 1px 4px rgba(0, 0, 0, 0.25);
  }

  .tool-box:last-child {
    margin-top: 2px;
  }

  .tool-box button,
  .map-zoom button {
    display: grid;
    place-items: center;
    height: 25px;
  }

  .map-zoom {
    position: absolute;
    top: 116px;
    right: 18px;
  }

  .map-zoom button + button {
    border-top: 1px solid #d8d8d8;
  }

  .coords {
    position: absolute;
    right: 10px;
    bottom: 15px;
    font-size: 9px;
    font-weight: 700;
  }

  /* --- Chart --- */
  .chart-bar {
    display: flex;
    align-items: center;
    gap: 11px;
    height: 33px;
    padding: 0 11px 0 14px;
    background: #fff;
  }

  .print {
    margin-left: auto;
  }

  .export {
    display: flex;
    align-items: center;
    justify-content: space-between;
    width: 81px;
    height: 26px;
    padding: 0 8px 0 7px;
    border: 1px solid #e6e7ea;
    border-radius: 4px;
  }

  .chart {
    padding: 8px 11px 8px 10px;
    background: #eee;
  }

  .chart svg {
    width: 100%;
    background: #fff;
  }

  .axis {
    font-size: 11px;
    fill: #7b7b7b;
  }

  /* --- Popup --- */
  .popup {
    position: absolute;
    top: 39px;
    left: 56px;
    width: 486px;
    padding: 16px 9px 11px 11px;
    border-radius: 4px;
    background: #fff;
    box-shadow: 0 4px 16px rgba(30, 40, 60, 0.2);
  }

  .popup-head {
    display: flex;
    align-items: center;
    justify-content: space-between;
    margin-bottom: 19px;
    padding-left: 11px;
    line-height: 16px;
  }

  .popup-head p {
    color: #5f6776;
    text-align: right;
  }

  h2 {
    font-size: 16px;
    font-weight: 500;
  }

  h3 {
    padding-left: 11px;
    font-size: 13px;
    font-weight: 500;
    line-height: 22px;
  }

  .second {
    margin: 14px 0 4px;
  }

  .facts {
    display: grid;
    grid-template-columns: 1fr 1fr;
    gap: 2px;
  }

  .cell {
    display: flex;
    align-items: center;
    gap: 3px;
    height: 27px;
    padding: 0 8px 0 11px;
    border-radius: 4px;
    background: #f5f5f5;
  }

  .cell.tall {
    height: 29px;
  }

  .cell.tall + .facts {
    margin-top: 21px;
  }

  .cell.full {
    grid-column: 1 / -1;
  }

  .cell.full button {
    margin-left: 8px;
  }

  .cell.iconed {
    gap: 9px;
    padding-left: 7px;
  }

  .cell b {
    font-weight: 500;
  }

  .grow {
    flex: 1;
  }

  .dot {
    width: 7px;
    height: 7px;
    border-radius: 50%;
    background: #1a7b30;
  }

  /* --- Footer --- */
  footer {
    display: flex;
    align-items: center;
    justify-content: space-between;
    height: 32px;
    padding: 0 15px 2px 19px;
    border-top: 1px solid #ebebeb;
  }

  .group-icons {
    display: flex;
    align-items: center;
    gap: 17px;
  }

  .group-icons.right {
    gap: 14px;
  }
</style>
